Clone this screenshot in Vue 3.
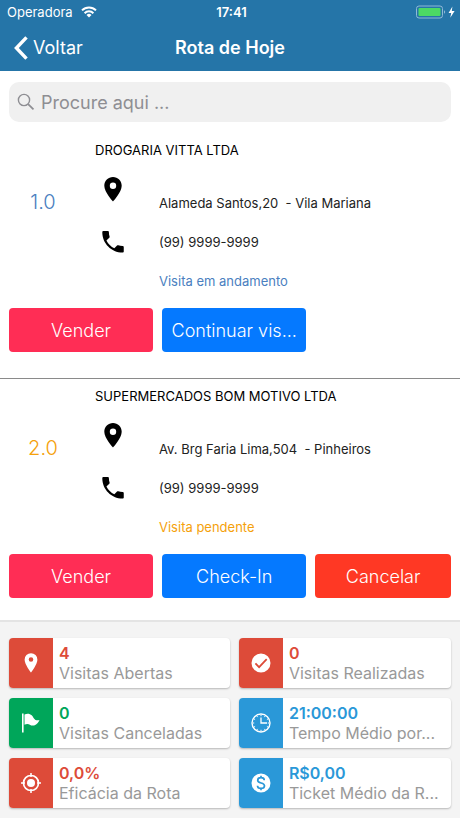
<script setup>
import { ref } from 'vue'

const busca = ref('')

const visitas = [
  {
    ordem: '1.0',
    nome: 'DROGARIA VITTA LTDA',
    endereco: 'Alameda Santos,20  - Vila Mariana',
    telefone: '(99) 9999-9999',
    status: 'Visita em andamento',
    tipo: 'andamento',
    acoes: [
      { texto: 'Vender', classe: 'vender' },
      { texto: 'Continuar vis...', classe: 'checkin' }
    ]
  },
  {
    ordem: '2.0',
    nome: 'SUPERMERCADOS BOM MOTIVO LTDA',
    endereco: 'Av. Brg Faria Lima,504  - Pinheiros',
    telefone: '(99) 9999-9999',
    status: 'Visita pendente',
    tipo: 'pendente',
    acoes: [
      { texto: 'Vender', classe: 'vender' },
      { texto: 'Check-In', classe: 'checkin' },
      { texto: 'Cancelar', classe: 'cancelar' }
    ]
  }
]

const indicadores = [
  { icone: 'pino', valor: '4', titulo: 'Visitas Abertas', cor: 'vermelho' },
  { icone: 'check', valor: '0', titulo: 'Visitas Realizadas', cor: 'vermelho' },
  { icone: 'bandeira', valor: '0', titulo: 'Visitas Canceladas', cor: 'verde' },
  { icone: 'relogio', valor: '21:00:00', titulo: 'Tempo Médio por...', cor: 'azul' },
  { icone: 'alvo', valor: '0,0%', titulo: 'Eficácia da Rota', cor: 'vermelho' },
  { icone: 'dinheiro', valor: 'R$0,00', titulo: 'Ticket Médio da R...', cor: 'azul' }
]
</script>

<template>
  <div class="tela">
    <header class="topo">
      <div class="status-bar">
        <div class="operadora">
          <span>Operadora</span>
          <svg width="16" height="12" viewBox="0 0 16 12" fill="none" stroke="#fff" stroke-width="2">
            <path d="M1 4.4a10 10 0 0 1 14 0" />
            <path d="M3.6 7.2a6.2 6.2 0 0 1 8.8 0" />
            <path d="M8 11.6 5.5 9a3.6 3.6 0 0 1 5 0z" fill="#fff" stroke="none" />
          </svg>
        </div>
        <span class="hora">17:41</span>
        <div class="bateria">
          <svg width="40" height="14" viewBox="0 0 40 14">
            <rect x="0.5" y="1" width="26" height="12" rx="2.5" fill="none" stroke="#8fb9d6" />
            <rect x="2.5" y="3" width="22" height="8" rx="1" fill="#4cd964" />
            <path d="M28 5.2v3.6q1.2-.5 1.2-1.8T28 5.2z" fill="#8fb9d6" />
            <path d="M36.4 1.5 32.6 8h2.6l-.9 4.8L38.6 6h-2.8z" fill="#fff" />
          </svg>
        </div>
      </div>
      <nav class="nav-bar">
        <button class="voltar" type="button">
          <svg width="14" height="24" viewBox="0 0 14 24" fill="none" stroke="#fff" stroke-width="3.4">
            <path d="M12.5 1.3 2.4 12l10.1 10.7" />
          </svg>
          <span>Voltar</span>
        </button>
        <h1>Rota de Hoje</h1>
      </nav>
    </header>

    <main>
      <label class="busca">
        <svg width="18" height="18" viewBox="0 0 18 18" fill="none" stroke="#8e8e93" stroke-width="1.4">
          <circle cx="7" cy="7" r="5.6" />
          <path d="m11.1 11.1 5.4 5.2" stroke-width="1.8" />
        </svg>
        <input v-model="busca" type="text" placeholder="Procure aqui ..." aria-label="Procure aqui" />
      </label>

      <article v-for="visita in visitas" :key="visita.ordem" class="visita" :class="visita.tipo">
        <div class="dados">
          <span class="ordem">{{ visita.ordem }}</span>
          <div class="detalhes">
            <h2>{{ visita.nome }}</h2>
            <div class="linha endereco">
              <svg width="36" height="28" viewBox="-6 -2 36 28">
                <path d="M12 0C7.2 0 3.3 3.9 3.3 8.7c0 6.400 8.700 15.700 8.700 15.700s8.700-9.300 8.700-15.700C20.700 3.900 16.800 0 12 0zm0 11.900a3.200 3.200 0 1 1 0-6.400 3.200 3.200 0 0 1 0 6.400z" />
              </svg>
              <span>{{ visita.endereco }}</span>
            </div>
            <div class="linha">
              <svg width="36" height="28" viewBox="-6 -2 36 28">
                <path d="M5.450 10.400c1.700 3.400 4.500 6.200 7.900 7.900l2.700-2.700c.3-.3.800-.4 1.200-.3 1.300.4 2.800.7 4.300.7.700 0 1.200.5 1.200 1.200v4.200c0 .7-.5 1.200-1.200 1.200C10.400 22.600 1.300 13.500 1.300 2.300c0-.7.500-1.200 1.200-1.200h4.200c.7 0 1.200.5 1.200 1.200 0 1.500.2 2.900.7 4.300.1.400 0 .9-.3 1.200z" />
              </svg>
              <span>{{ visita.telefone }}</span>
            </div>
            <p class="situacao">{{ visita.status }}</p>
          </div>
        </div>
        <div class="acoes">
          <button v-for="acao in visita.acoes" :key="acao.texto" type="button" :class="acao.classe">
            {{ acao.texto }}
          </button>
        </div>
      </article>
    </main>

    <footer class="resumo">
      <section v-for="item in indicadores" :key="item.titulo" class="cartao" :class="item.cor">
        <div class="icone">
          <svg v-if="item.icone === 'pino'" width="20" height="20" viewBox="0 0 20 20" fill="#fff">
            <path d="M10 .2a6.400 6.400 0 0 0-6.400 6.500C3.600 11.300 10 19.600 10 19.600s6.400-8.300 6.400-12.900A6.400 6.400 0 0 0 10 .2zm0 8.600a2.300 2.300 0 1 1 0-4.600 2.300 2.300 0 0 1 0 4.600z" />
          </svg>
          <svg v-else-if="item.icone === 'check'" width="20" height="20" viewBox="0 0 20 20">
            <circle cx="10" cy="10" r="9.5" fill="#fff" />
            <path d="m4.400 10.300 3.700 3.800 7.600-7.900" fill="none" stroke="#dd4b39" stroke-width="1.8" />
          </svg>
          <svg v-else-if="item.icone === 'bandeira'" width="20" height="20" viewBox="0 0 20 20" fill="#fff">
            <path d="M1 .6h1.600v19H1z" />
            <path d="M3.500 1.500c2.600-1.300 5.400-1 7.200.8 1.600 1.600 2.200 3.900 3.800 4.600 1.300.6 2.900.4 4 0-1.100 2.700-3.500 5.500-6.400 5.700-2.800.1-3.700-1.700-5.700-1.700-1.100 0-2.100.4-2.900.9z" />
          </svg>
          <svg v-else-if="item.icone === 'relogio'" width="20" height="20" viewBox="0 0 20 20" fill="none" stroke="#fff">
            <circle cx="10" cy="10" r="9" stroke-width="1.4" />
            <path d="M10 4.500V10h6" stroke-width="1.3" />
            <path d="M10 2v1.200M10 16.800V18M2 10h1.200M16.800 10H18M6 3.100l.6 1M13.400 15.900l.6 1M3.100 6l1 .6M15.900 13.400l1 .6M3.100 14l1-.6M15.900 6.600l1-.6M6 16.900l.6-1M13.400 4.100l.6-1" stroke-width="1" />
          </svg>
          <svg v-else-if="item.icone === 'alvo'" width="20" height="20" viewBox="0 0 20 20" fill="none" stroke="#fff">
            <circle cx="10" cy="10" r="7.5" stroke-width="1.7" />
            <circle cx="10" cy="10" r="4" fill="#fff" stroke="none" />
            <path d="M10 0v4M10 16v4M0 10h4M16 10h4" stroke-width="1.5" />
          </svg>
          <svg v-else width="20" height="20" viewBox="0 0 20 20">
            <circle cx="10" cy="10" r="9.5" fill="#fff" />
            <path d="M13.300 7.200c0-1.600-1.400-2.600-3.300-2.600S6.700 5.600 6.700 7.200c0 3.700 6.800 1.800 6.800 5.500 0 1.700-1.500 2.700-3.500 2.700s-3.500-1-3.500-2.700M10 2.700v2M10 15.300v2" fill="none" stroke="#2a98d8" stroke-width="1.7" />
          </svg>
        </div>
        <div class="texto">
          <strong>{{ item.valor }}</strong>
          <span>{{ item.titulo }}</span>
        </div>
      </section>
    </footer>
  </div>
</template>

<style>
body {
  margin: 0;
  background: #f4f4f4;
}
</style>

<style scoped>
.tela {
  font-family: Inter, "Liberation Sans", sans-serif;
  color: #222;
  background: #fff;
}

h1,
h2,
p {
  margin: 0;
}

button {
  border: none;
  padding: 0;
  font-family: inherit;
  cursor: pointer;
}

svg {
  display: block;
  flex-shrink: 0;
}

/* Cabeçalho */
.topo {
  background: #2575a8;
  color: #fff;
}

.status-bar {
  display: grid;
  grid-template-columns: 1fr auto 1fr;
  align-items: center;
  height: 24px;
  padding: 0 4px 0 7px;
  font-size: 13px;
}

.operadora {
  display: flex;
  align-items: center;
  gap: 8px;
}

.hora {
  font-weight: 600;
}

.bateria {
  display: flex;
  justify-content: flex-end;
}

.nav-bar {
  display: grid;
  grid-template-columns: 1fr auto 1fr;
  align-items: center;
  height: 47px;
  padding: 0 14px;
}

.voltar {
  display: flex;
  align-items: center;
  gap: 5px;
  background: none;
  color: #fff;
  font-size: 18px;
}

h1 {
  font-size: 18px;
  font-weight: 600;
}

/* Busca */
.busca {
  display: flex;
  align-items: center;
  gap: 6px;
  height: 40px;
  margin: 11px 9px;
  padding: 0 8px;
  border-radius: 10px;
  background: #f0f0f0;
}

.busca input {
  flex: 1;
  min-width: 0;
  padding: 0;
  border: none;
  outline: none;
  background: none;
  font-family: inherit;
  font-size: 18px;
  color: #222;
}

.busca input::placeholder {
  color: #8e8e93;
  opacity: 1;
}

/* Visitas */
.visita {
  padding: 7px 9px 26px;
}

.visita + .visita {
  border-top: 1px solid #8a8a8a;
  padding-bottom: 22px;
}

.dados {
  display: flex;
  align-items: center;
  height: 168px;
}

.ordem {
  width: 68px;
  margin-right: 18px;
  padding-bottom: 44px;
  font-size: 20px;
  font-weight: 300;
  text-align: center;
}

.detalhes {
  flex: 1;
  align-self: flex-start;
}

h2 {
  margin-bottom: 15px;
  font-size: 13px;
  font-weight: 400;
  line-height: 20px;
  color: #000;
}

.linha {
  display: flex;
  align-items: center;
  gap: 28px;
  margin-bottom: 15px;
  font-size: 13px;
  line-height: 20px;
  white-space: pre;
}

.endereco {
  align-items: flex-start;
}

.endereco span {
  padding-top: 18px;
}

.situacao {
  padding-left: 64px;
  font-size: 13px;
  line-height: 20px;
}

.andamento .ordem,
.andamento .situacao {
  color: #4a80c0;
}

.pendente .ordem,
.pendente .situacao {
  color: #f5a10b;
}

.acoes {
  display: grid;
  grid-template-columns: 17fr 17fr 16fr;
  gap: 9px;
}

.acoes button {
  height: 44px;
  border-radius: 4px;
  color: #fff;
  font-size: 18px;
  font-weight: 300;
  white-space: nowrap;
}

.vender {
  background: #ff2d55;
}

.checkin {
  background: #0579ff;
}

.cancelar {
  background: #ff3824;
}

/* Indicadores */
.resumo {
  display: grid;
  grid-template-columns: 25fr 24fr;
  gap: 10px 9px;
  padding: 16px 9px 9px;
  border-top: 2px solid #e4e4e4;
  background: #f4f4f4;
}

.cartao {
  display: flex;
  height: 50px;
  overflow: hidden;
  border-radius: 4px;
  background: #fff;
  box-shadow: 0 1px 2px rgba(0, 0, 0, 0.25);
}

.icone {
  display: flex;
  align-items: center;
  justify-content: center;
  flex: 0 0 44px;
}

.texto {
  display: flex;
  flex-direction: column;
  justify-content: center;
  padding-left: 6px;
  font-size: 16px;
  line-height: 20px;
  white-space: nowrap;
}

.texto span {
  color: #999;
}

.texto strong {
  font-weight: 600;
}

.vermelho .icone {
  background: #dd4b39;
}

.vermelho strong {
  color: #dd4b39;
}

.verde .icone {
  background: #00a65a;
}

.verde strong {
  color: #00a65a;
}

.azul .icone {
  background: #2a98d8;
}

.azul strong {
  color: #2a98d8;
}
</style>
